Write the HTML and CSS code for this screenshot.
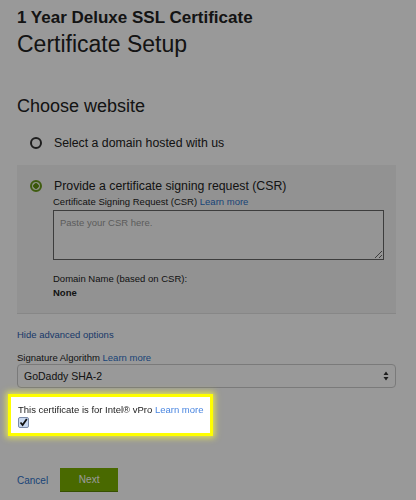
FILE: index.html
```html
<!DOCTYPE html>
<html>
	<head>
		<title>Certificate Setup</title>
		<link rel="stylesheet" href="styles.css">
	</head>

	<body>
		<div class="page">
			<h1 class="product">1 Year Deluxe SSL Certificate</h1>
			<h2 class="title">Certificate Setup</h2>

			<h3 class="section">Choose website</h3>

			<div class="option">
				<span class="radio"></span>
				<span class="optionLabel">Select a domain hosted with us</span>
			</div>

			<div class="option selected">
				<div class="optionHead">
					<span class="radio checked"></span>
					<span class="optionLabel">Provide a certificate signing request (CSR)</span>
				</div>
				<div class="optionBody">
					<label class="small">Certificate Signing Request (CSR) <a href="#">Learn more</a></label>
					<textarea class="csr" placeholder="Paste your CSR here."></textarea>
					<div class="small domain">Domain Name (based on CSR):</div>
					<div class="small strong">None</div>
				</div>
			</div>

			<a class="small toggle" href="#">Hide advanced options</a>

			<label class="small algo">Signature Algorithm <a href="#">Learn more</a></label>
			<div class="select">
				<span>GoDaddy SHA-2</span>
				<svg width="6" height="10" viewBox="0 0 6 10"><path d="M3 0.5L5.5 4H0.5z M3 9.5L0.5 6h5z" fill="#333"/></svg>
			</div>

			<div class="highlight">
				<div class="small">This certificate is for Intel® vPro <a href="#">Learn more</a></div>
				<span class="check">
					<svg width="9" height="9" viewBox="0 0 9 9"><path d="M1.5 4.5L3.6 7L7.8 1" fill="none" stroke="#111" stroke-width="1.8"/></svg>
				</span>
			</div>

			<div class="actions">
				<a class="cancel" href="#">Cancel</a>
				<button class="next">Next</button>
			</div>
		</div>
		<div class="overlay"></div>
	</body>
</html>
```

FILE: styles.css
```css
html, body {
	margin: 0px;
	padding: 0px;
	background: white;
	color: #333;
	font-family: "Liberation Sans", Arial, sans-serif;
}

a {
	color: #2e72c8;
	text-decoration: none;
}

.page {
	padding: 8px 20px 0px 17px;
}

.product {
	font-size: 17px;
	font-weight: bold;
	margin: 0px;
	line-height: 20px;
	color: #222;
}

.title {
	font-size: 23px;
	font-weight: normal;
	margin: 2px 0px 0px 0px;
	line-height: 28px;
	color: #222;
}

.section {
	font-size: 18px;
	font-weight: normal;
	margin: 37px 0px 0px 0px;
	line-height: 22px;
	color: #222;
}

.option {
	display: flex;
	align-items: center;
	gap: 12px;
	padding: 19px 13px 11px 13px;
}

.optionLabel {
	font-size: 12.3px;
	line-height: 14px;
	color: #222;
}

.radio {
	width: 8px;
	height: 8px;
	border: 2px solid #333;
	border-radius: 50%;
	flex: none;
}

.radio.checked {
	border-color: #6a9a1c;
	background: radial-gradient(circle, #5f9010 0px, #5f9010 2.5px, #e8f0d8 3px);
}

.option.selected {
	display: block;
	background: #f4f4f4;
	border-bottom: 1px solid #e2e2e2;
	padding: 14px 13px 13px 13px;
	margin-top: 4px;
}

.optionHead {
	display: flex;
	align-items: center;
	gap: 12px;
}

.optionBody {
	padding-left: 23px;
	display: flex;
	flex-direction: column;
}

.small {
	font-size: 9.5px;
	line-height: 13px;
	color: #222;
}

label.small {
	display: block;
	margin-top: 2px;
}

.csr {
	box-sizing: border-box;
	width: 331px;
	height: 50px;
	margin: 2px 0px 0px 0px;
	border: 1px solid #666;
	padding: 6px 6px;
	font-family: "Liberation Sans", Arial, sans-serif;
	font-size: 9.5px;
	background: #f9f9f9;
	display: block;
}

.csr::placeholder {
	color: #999;
}

.domain {
	margin-top: 12px;
	line-height: 14px;
}

.strong {
	font-weight: bold;
	line-height: 14px;
}

.toggle {
	display: block;
	margin-top: 14px;
	color: #2e62b0;
}

label.algo {
	margin-top: 10px;
}

.select {
	display: flex;
	justify-content: space-between;
	align-items: center;
	height: 22px;
	border: 1px solid #ccc;
	border-radius: 4px;
	padding: 0px 6px 0px 6px;
	font-size: 10.5px;
	color: #222;
	margin-top: 0px;
}

.highlight {
	position: relative;
	z-index: 2;
	box-sizing: border-box;
	width: 205px;
	margin: 6px 0px 0px -9px;
	padding: 6px 4px 4px 7px;
	background: white;
	border: 3px solid #ffff00;
	box-shadow: 0px 0px 6px 2px rgba(255, 255, 60, 0.7);
}

.highlight a {
	color: #4a86e0;
}

.check {
	display: flex;
	align-items: center;
	justify-content: center;
	width: 9px;
	height: 9px;
	margin: 1px 0px 1px 0px;
	border: 1px solid #7a8aa8;
	border-radius: 2px;
	background: #c8d8f0;
}

.actions {
	display: flex;
	align-items: center;
	gap: 12px;
	margin-top: 32px;
}

.cancel {
	font-size: 10px;
}

.next {
	width: 58px;
	height: 24px;
	border: none;
	border-bottom: 1px solid #5c8600;
	background: #7bb000;
	color: white;
	font-family: "Liberation Sans", Arial, sans-serif;
	font-size: 10px;
}

.overlay {
	position: fixed;
	left: 0px;
	right: 0px;
	top: 0px;
	bottom: 0px;
	background: rgba(0, 0, 0, 0.4);
	z-index: 1;
}
```
